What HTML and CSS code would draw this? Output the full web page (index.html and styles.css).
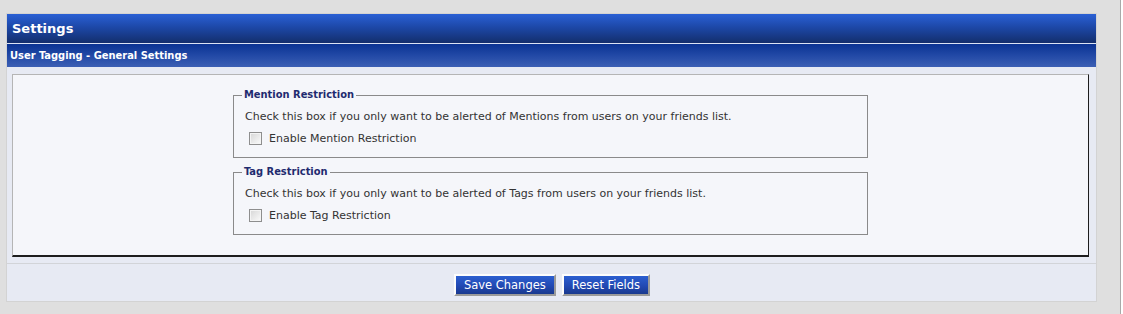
FILE: index.html
```html
<!DOCTYPE html>
<html lang="en">
<head>
  <meta charset="UTF-8">
  <title>Settings - User Tagging</title>
  <link rel="stylesheet" href="styles.css">
</head>
<body>
  <div class="page">
    <form class="panel" id="tagging-form" autocomplete="off">
      <div class="panel-head">Settings</div>
      <div class="panel-sub">User Tagging - General Settings</div>
      <div class="panel-body">
        <div class="settings-box">
          <fieldset class="opt-group">
            <legend>Mention Restriction</legend>
            <div class="opt-desc">Check this box if you only want to be alerted of Mentions from users on your friends list.</div>
            <label class="opt-row">
              <input type="checkbox" name="mention_restrict" class="chk">
              <span>Enable Mention Restriction</span>
            </label>
          </fieldset>
          <fieldset class="opt-group">
            <legend>Tag Restriction</legend>
            <div class="opt-desc">Check this box if you only want to be alerted of Tags from users on your friends list.</div>
            <label class="opt-row">
              <input type="checkbox" name="tag_restrict" class="chk">
              <span>Enable Tag Restriction</span>
            </label>
          </fieldset>
        </div>
      </div>
      <div class="panel-foot">
        <button type="submit" class="btn">Save Changes</button>
        <button type="reset" class="btn">Reset Fields</button>
      </div>
    </form>
  </div>
</body>
</html>
```

FILE: styles.css
```css
body {
  margin: 0; padding: 0;
  background: #fff;
  font-family: Tahoma, "DejaVu Sans", sans-serif;
  font-size: 11px;
  color: #333;
}
.page {
  width: 1121px;
  height: 314px;
  background: #dfdfdf;
  border-right: 1px solid #a9a9a9;
  padding: 13px 0 0 6px;
  box-sizing: border-box;
}
.panel {
  width: 1091px;
  border: 1px solid #d3d3d3;
  background: #e7eaf3;
  box-sizing: border-box;
  margin: 0;
}
.panel-head {
  height: 29px;
  line-height: 29px;
  padding-left: 5px;
  color: #fff;
  font-size: 13px;
  font-weight: bold;
  background: linear-gradient(180deg, #2a60d4 0%, #1d48a8 45%, #132e6c 100%);
  border-bottom: 1px solid #dbe3f4;
}
.panel-sub {
  height: 23px;
  line-height: 23px;
  padding-left: 3px;
  color: #fff;
  font-family: Tahoma, "DejaVu Sans Condensed", sans-serif;
  font-weight: bold;
  background: linear-gradient(180deg, #0a3393 0%, #2249a6 50%, #3c5fb4 100%);
}
.panel-body {
  padding: 7px 7px 6px 5px;
  border-bottom: 1px solid #d2d4d8;
}
.settings-box {
  background: #f5f6fa;
  border: 1px solid #b5b5b5;
  border-right-color: #1d1d1d;
  border-bottom: 2px solid #1d1d1d;
  padding: 13px 0 20px;
}
.opt-group {
  width: 635px;
  margin: 0 auto 7px auto;
  padding: 0 10px 11px 11px;
  border: 1px solid #8a8a8a;
  box-sizing: border-box;
}
.opt-group:last-child { margin-bottom: 0; }
.opt-group legend {
  font-family: Tahoma, "DejaVu Sans Condensed", sans-serif;
  font-weight: bold;
  color: #1f2b6f;
  line-height: 14px;
  padding: 0 2px;
  margin-left: -3px;
}
.opt-desc {
  margin-top: 8px;
  line-height: 14px;
}
.opt-row {
  display: flex;
  align-items: center;
  gap: 7px;
  margin-top: 6px;
  margin-left: 4px;
  height: 16px;
}
.chk {
  -webkit-appearance: none;
  appearance: none;
  width: 13px; height: 13px;
  margin: 0;
  border: 1px solid #8e8e8e;
  background: linear-gradient(135deg, #d6d6d6 0%, #ececec 60%, #fbfbfb 100%);
  box-shadow: inset 0 0 0 1px #f4f4f4;
}
.panel-foot {
  display: flex;
  justify-content: center;
  gap: 6px;
  padding: 10px 0 5px 1px;
}
.btn {
  height: 22px;
  padding: 0 8px;
  font-family: inherit;
  font-size: 11.5px;
  color: #fff;
  background: linear-gradient(180deg, #2c5fd0 0%, #2249b3 55%, #19398f 100%);
  border: 2px solid;
  border-color: #fdfdfd #9a9a9a #9a9a9a #fdfdfd;
  cursor: pointer;
}
```
